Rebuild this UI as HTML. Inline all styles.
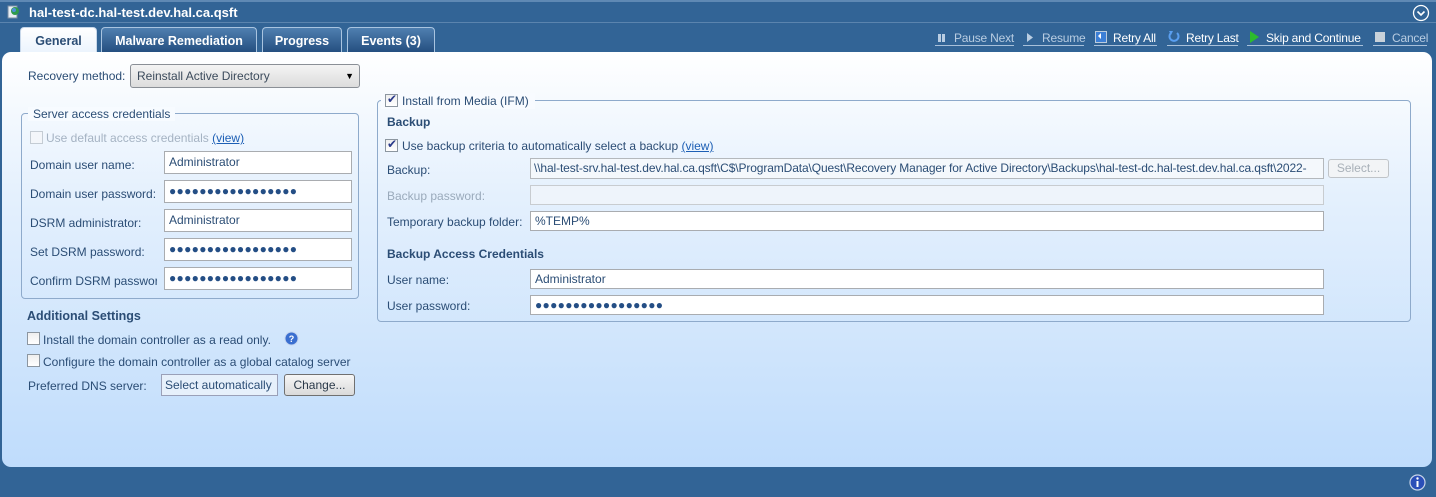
<!DOCTYPE html>
<html><head><meta charset="utf-8"><style>
*{box-sizing:border-box;margin:0;padding:0}
body{width:1436px;height:497px;background:#326496;font-family:"Liberation Sans",sans-serif;font-size:12px;color:#2b4d75;position:relative;overflow:hidden}
.a{position:absolute;white-space:nowrap}
.panel{position:absolute;left:2px;top:52px;width:1430px;height:415px;border-radius:9px;background:linear-gradient(#ffffff 0%,#e4f0fd 35%,#bfdcfc 100%)}
.tab{position:absolute;top:27px;height:26px;border:1px solid #a9c4e0;border-bottom:none;border-radius:4px 4px 0 0;background:linear-gradient(#4f7fb0,#234d7e);color:#fff;font-weight:bold;font-size:12.5px;text-align:center;line-height:26px}
.tab.sel{background:linear-gradient(#fff,#eaf3fd);color:#2b4d75;height:27px;border-color:#c8d8ea}
.tb{position:absolute;top:30px;color:#fff;font-size:12px;border-bottom:1px solid #a8c0da;height:16px;padding-left:19px;white-space:nowrap;letter-spacing:-0.2px;line-height:16px}
.tb.dis{color:#b9cde2}
.in{position:absolute;height:23px;background:#fff;border:1px solid #a9acb0;padding-left:4px;line-height:21px;color:#2b4d75;font-size:12px;white-space:nowrap}
.dots{letter-spacing:0.3px;font-size:12px;color:#244e85}
.cb{position:absolute;width:13px;height:13px;border:1px solid #8c96a0;background:linear-gradient(#eee,#fff)}
.grp{position:absolute;border:1px solid #8eaacb;border-radius:4px}
a{color:#1d5fb5;text-decoration:underline}
.b{font-weight:bold}
</style></head><body>
<div class="a" style="left:0;top:0;width:1436px;height:2px;background:#5f89b4"></div>
<div class="a" style="left:0;top:22px;width:1436px;height:1px;background:#5b84ae"></div>
<svg class="a" style="left:7px;top:5px" width="14" height="14"><rect x="1" y="1" width="9" height="12" fill="#e8eef4" stroke="#7a8ea4"/><circle cx="8" cy="6" r="4" fill="#2e9a4c"/><circle cx="7" cy="5" r="2" fill="#4d8fd8"/></svg>
<div class="a b" style="left:29px;top:5px;color:#fff;font-size:13px">hal-test-dc.hal-test.dev.hal.ca.qsft</div>
<svg class="a" style="left:1412px;top:4px" width="18" height="18"><circle cx="9" cy="9" r="7.5" fill="none" stroke="#fff" stroke-width="1.3"/><path d="M5.5 7.5 L9 11 L12.5 7.5" fill="none" stroke="#fff" stroke-width="1.6"/></svg>
<div class="tab sel" style="left:20px;width:77px">General</div>
<div class="tab" style="left:101px;width:156px">Malware Remediation</div>
<div class="tab" style="left:262px;width:80px">Progress</div>
<div class="tab" style="left:347px;width:88px">Events (3)</div>
<div class="tb dis" style="left:935px;width:79px">Pause Next</div>
<svg class="a" style="left:937px;top:33px" width="10" height="10"><rect x="1" y="1" width="3" height="8" fill="#b9cde2"/><rect x="5" y="1" width="3" height="8" fill="#b9cde2"/></svg>
<div class="tb dis" style="left:1023px;width:61px">Resume</div>
<svg class="a" style="left:1025px;top:32px" width="10" height="11"><path d="M2 1 L8 5.5 L2 10Z" fill="#b9cde2"/></svg>
<div class="tb" style="left:1094px;width:63px">Retry All</div>
<svg class="a" style="left:1095px;top:31px" width="12" height="12"><rect x="0.5" y="0.5" width="11" height="11" fill="#3c7fd6" stroke="#bcd"/><path d="M3 5 L6 2 L6 8Z" fill="#fff"/></svg>
<div class="tb" style="left:1167px;width:71px">Retry Last</div>
<svg class="a" style="left:1168px;top:30px" width="12" height="13"><path d="M3 3 A4.5 4.5 0 1 0 9 3" fill="none" stroke="#5a9ff0" stroke-width="2"/><path d="M1 1 L5 1 L3 5Z" fill="#5a9ff0"/></svg>
<div class="tb" style="left:1247px;width:116px">Skip and Continue</div>
<svg class="a" style="left:1249px;top:30px" width="11" height="14"><path d="M1 1 L10 7 L1 13Z" fill="#2dbb2d"/></svg>
<div class="tb dis" style="left:1373px;width:54px">Cancel</div>
<svg class="a" style="left:1375px;top:32px" width="10" height="10"><rect x="0" y="0" width="10" height="10" fill="#c9d2da"/></svg>

<div class="panel"></div>
<div class="a" style="left:28px;top:69px">Recovery method:</div>
<div class="a" style="left:130px;top:64px;width:230px;height:24px;border:1px solid #8a8f96;border-radius:3px;background:linear-gradient(#f4f4f4,#dcdcdc);padding-left:6px;line-height:22px;color:#3c4b5c">Reinstall Active Directory<span style="position:absolute;right:5px;font-size:9px;color:#000">▼</span></div>

<div class="grp" style="left:21px;top:113px;width:338px;height:186px"></div>
<div class="a" style="left:28px;top:107px;background:#f7fbff;padding:0 5px;color:#2b4d75">Server access credentials</div>
<div class="cb" style="left:30px;top:131px;border-color:#c4ccd4;background:#f3f6fa"></div>
<div class="a" style="left:46px;top:131px;color:#a5b3c3">Use default access credentials <a>(view)</a></div>
<div class="a" style="left:30px;top:158px">Domain user name:</div>
<div class="in" style="left:164px;top:151px;width:188px">Administrator</div>
<div class="a" style="left:30px;top:187px">Domain user password:</div>
<div class="in dots" style="left:164px;top:180px;width:188px">●●●●●●●●●●●●●●●●●</div>
<div class="a" style="left:30px;top:216px">DSRM administrator:</div>
<div class="in" style="left:164px;top:209px;width:188px">Administrator</div>
<div class="a" style="left:30px;top:245px">Set DSRM password:</div>
<div class="in dots" style="left:164px;top:238px;width:188px">●●●●●●●●●●●●●●●●●</div>
<div class="a" style="left:30px;top:274px;width:127px;overflow:hidden">Confirm DSRM password:</div>
<div class="in dots" style="left:164px;top:267px;width:188px">●●●●●●●●●●●●●●●●●</div>

<div class="a b" style="left:27px;top:309px;font-size:12.5px">Additional Settings</div>
<div class="cb" style="left:27px;top:332px"></div>
<div class="a" style="left:43px;top:333px">Install the domain controller as a read only.</div>
<svg class="a" style="left:284px;top:331px" width="15" height="15"><circle cx="7.5" cy="7.5" r="6.5" fill="#3a6fd0" stroke="#c4d4ee"/><text x="7.5" y="11" font-size="9" fill="#fff" text-anchor="middle" font-weight="bold" font-family="Liberation Sans">?</text></svg>
<div class="cb" style="left:27px;top:354px"></div>
<div class="a" style="left:43px;top:355px">Configure the domain controller as a global catalog server</div>
<div class="a" style="left:28px;top:379px">Preferred DNS server:</div>
<div class="a" style="left:161px;top:374px;width:117px;height:22px;border:1px solid #9aa0b8;padding-left:3px;line-height:20px;background:#e6f0fb">Select automatically</div>
<div class="a" style="left:284px;top:374px;width:71px;height:22px;border:1px solid #707070;border-radius:3px;background:linear-gradient(#f6f6f6,#dadada);text-align:center;line-height:20px;color:#2b3a4a">Change...</div>

<div class="grp" style="left:377px;top:100px;width:1034px;height:222px"></div>
<div class="a" style="left:381px;top:93px;background:#f8fbff;padding:0 4px 0 4px;width:154px;height:16px"></div>
<div class="cb" style="left:385px;top:94px"></div>
<div class="a" style="left:387px;top:92px;font-size:12px;color:#2a3a8a">✔</div>
<div class="a" style="left:402px;top:94px">Install from Media (IFM)</div>
<div class="a b" style="left:387px;top:115px">Backup</div>
<div class="cb" style="left:385px;top:139px"></div>
<div class="a" style="left:387px;top:137px;color:#2a3a8a">✔</div>
<div class="a" style="left:402px;top:139px">Use backup criteria to automatically select a backup <a>(view)</a></div>
<div class="a" style="left:387px;top:163px">Backup:</div>
<div class="in" style="left:530px;top:158px;overflow:hidden;background:#f4f8fc;border-color:#b4b8bc;height:21px;line-height:19px;width:794px;font-size:12px;letter-spacing:-0.12px;padding-left:3px">\\hal-test-srv.hal-test.dev.hal.ca.qsft\C$\ProgramData\Quest\Recovery Manager for Active Directory\Backups\hal-test-dc.hal-test.dev.hal.ca.qsft\2022-</div>
<div class="a" style="left:1328px;top:159px;width:61px;height:19px;border:1px solid #c0c4c8;border-radius:3px;background:#f2f4f6;color:#a8b0b8;text-align:center;line-height:17px">Select...</div>
<div class="a" style="left:387px;top:189px;color:#9aaabb">Backup password:</div>
<div class="in" style="left:530px;top:185px;width:794px;height:20px;background:#eef4fb;border-color:#c8ccd0"></div>
<div class="a" style="left:387px;top:215px">Temporary backup folder:</div>
<div class="in" style="left:530px;top:211px;width:794px;height:20px;line-height:18px">%TEMP%</div>
<div class="a b" style="left:387px;top:247px">Backup Access Credentials</div>
<div class="a" style="left:387px;top:273px">User name:</div>
<div class="in" style="left:530px;top:269px;width:794px;height:20px;line-height:18px">Administrator</div>
<div class="a" style="left:387px;top:299px">User password:</div>
<div class="in dots" style="left:530px;top:295px;width:794px;height:20px;line-height:18px">●●●●●●●●●●●●●●●●●</div>

<svg class="a" style="left:1409px;top:474px" width="17" height="17"><circle cx="8.5" cy="8.5" r="7.5" fill="#2a4fb8" stroke="#c8d4e8" stroke-width="1.2"/><rect x="7.5" y="7" width="2" height="6" fill="#fff"/><circle cx="8.5" cy="4.5" r="1.2" fill="#fff"/></svg>
</body></html>
